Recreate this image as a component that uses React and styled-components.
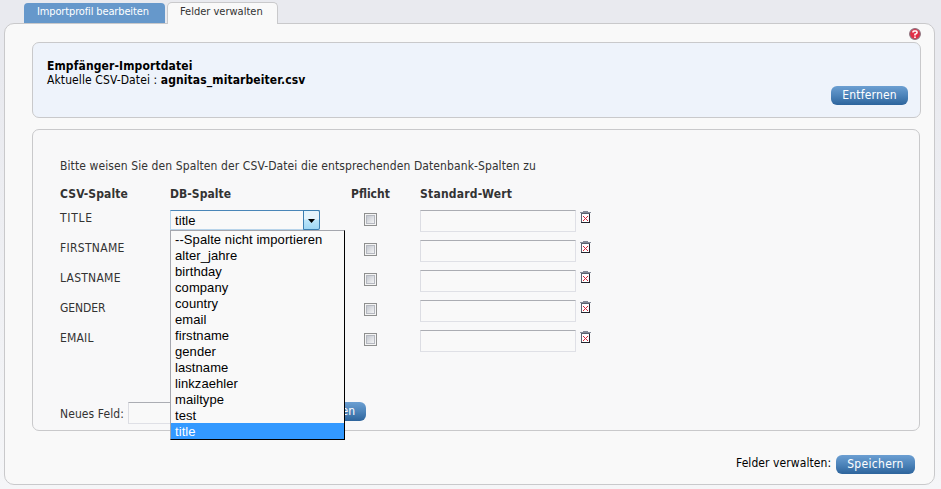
import React from "react";
import styled, { createGlobalStyle } from "styled-components";

const Global = createGlobalStyle`
  *, *::before, *::after { box-sizing: border-box; }
  html, body { margin: 0; height: 489px; overflow: hidden; background: #e9eaef; }
  body {
    font-family: "DejaVu Sans Condensed", "DejaVu Sans", sans-serif;
    font-stretch: condensed;
    font-size: 12px;
    line-height: 14px;
    color: #333;
  }
`;

const Page = styled.div`
  width: 941px;
  height: 489px;
  padding: 2px 6px 0 4px;
  background: linear-gradient(#e9eaef 15%, #f5f6f8);
`;

const Tabs = styled.nav`
  display: flex;
  align-items: flex-end;
  gap: 2px;
  height: 22px;
  padding-left: 20px;
  position: relative;
  z-index: 1;
`;

const Tab = styled.a`
  width: ${(p) => p.$width}px;
  height: ${(p) => (p.$active ? 22 : 20)}px;
  margin-bottom: ${(p) => (p.$active ? 0 : 1)}px;
  padding: ${(p) => (p.$active ? "2px 0 0 12px" : "2px 0 0 13px")};
  border-radius: ${(p) => (p.$active ? "5px 5px 0 0" : "4px 4px 0 0")};
  border: solid #c9c9cb;
  border-width: ${(p) => (p.$active ? "1px 1px 0" : "0")};
  background: ${(p) => (p.$active ? "#f9f9f9" : "#6698cb")};
  color: ${(p) => (p.$active ? "#333" : "#fff")};
  font-size: 11px;
  white-space: nowrap;
`;

const Text = styled.span`
  display: inline-block;
  white-space: nowrap;
  letter-spacing: ${(p) => p.$track || 0}px;
  font-weight: ${(p) => (p.$bold ? "bold" : "normal")};
`;

const Panel = styled.main`
  display: flex;
  flex-direction: column;
  height: 462px;
  margin-top: -1px;
  padding: 4px 14px 0 27px;
  border: 1px solid #c9c9cb;
  border-radius: 10px;
  background: #f9f9f9;
`;

const HelpRow = styled.div`
  display: flex;
  justify-content: flex-end;
  height: 14px;
  margin-right: -2px;
`;

const FileCard = styled.section`
  display: flex;
  justify-content: space-between;
  width: 889px;
  height: 76px;
  padding: 16px 12px 0 14px;
  border: 1px solid #c9c9cb;
  border-radius: 7px;
  background: #eef3fb;
  color: #000;
`;

const FileInfo = styled.div`
  display: flex;
  flex-direction: column;
`;

const Button = styled.button`
  display: block;
  flex: none;
  width: ${(p) => p.$width}px;
  height: 19px;
  margin: ${(p) => p.$margin || 0};
  padding: 0;
  border: 0;
  border-radius: 6px;
  background: linear-gradient(#6c9fd2, #4d84ba 50%, #2d649c);
  color: #fff;
  font: inherit;
  line-height: 17px;
  text-align: ${(p) => p.$align || "center"};
  padding-right: ${(p) => (p.$align ? 11 : 0)}px;
`;

const FieldsCard = styled.section`
  width: 888px;
  height: 302px;
  margin-top: 11px;
  padding: 29px 0 0 27px;
  border: 1px solid #c9c9cb;
  border-radius: 7px;
  background: #f8f8f9;
`;

const Intro = styled.p`
  margin: 0 0 14px;
  height: 14px;
`;

const Grid = styled.div`
  display: grid;
  grid-template-columns: 110px 181px 69px 160px 20px;
  grid-template-rows: 23px;
  grid-auto-rows: 30px;
`;

const Cell = styled.div`
  padding: ${(p) => p.$pad || 0};
`;

const Input = styled.div`
  width: ${(p) => p.$width || 156}px;
  height: 22px;
  border: 1px solid #dfe0e6;
  border-top-color: #abadb3;
  border-left-color: #dcdde3;
  background: #f9f9f9;
`;

const Checkbox = styled.div`
  width: 13px;
  height: 13px;
  border: 1px solid #8e8f8f;
  padding: 1px;
  background: #f4f4f4;
  &::before {
    content: "";
    display: block;
    height: 9px;
    border: 1px solid #b5b8c0;
    background: linear-gradient(135deg, #c4c8d0, #f3f3f4);
  }
`;

const SelectBox = styled.div`
  position: relative;
  display: flex;
  width: 150px;
  height: 20px;
  border: 1px solid #b8d4ea;
  border-top-color: #4a86b8;
  background: #f9f9f9;
  color: #000;
  font: 13px/19px "Liberation Sans", Arial, sans-serif;
  letter-spacing: 0.08px;
`;

const SelectValue = styled.div`
  flex: 1;
  padding-left: 4px;
`;

const Arrow = styled.div`
  display: flex;
  align-items: center;
  justify-content: center;
  width: 17px;
  height: 20px;
  margin: -1px -1px 0 0;
  padding-top: 2px;
  border: 1px solid #3c7fb1;
  border-radius: 0 2px 2px 0;
  background: linear-gradient(#e5f4fc 45%, #bce5fa 50%, #9fd8f5);
`;

const Menu = styled.ul`
  position: absolute;
  z-index: 2;
  left: -1px;
  top: 19px;
  width: 175px;
  height: 210px;
  margin: 0;
  padding: 0;
  list-style: none;
  border: 1px solid #000;
  border-top-color: #a5a7ae;
  border-left-color: #a5a7ae;
  background: #f9f9f9;
`;

const Option = styled.li`
  height: 16px;
  padding-left: 4px;
  line-height: 17px;
  background: ${(p) => (p.$selected ? "#3399ff" : "transparent")};
  color: ${(p) => (p.$selected ? "#fff" : "#000")};
  white-space: nowrap;
`;

const NewField = styled.div`
  display: flex;
  align-items: flex-start;
  margin-top: 42px;
`;

const NewLabel = styled.label`
  width: 68px;
  padding-top: 5px;
`;

const Footer = styled.footer`
  display: flex;
  justify-content: flex-end;
  margin-top: 24px;
  padding-right: 5px;
  color: #000;
`;

const FooterLabel = styled.span`
  width: 100px;
  padding-top: 1px;
`;

const Help = () => (
  <svg width="14" height="14" viewBox="0 0 14 14">
    <circle cx="7" cy="6" r="5.4" fill="#e22d47" stroke="#8c7580" strokeWidth="1.1" />
    <path d="M5 4.5V4q0-1 1-1h2q1 0 1 1v.6q0 .6-.7 1L7 6.3v1.2M7 8.5v1.4" fill="none" stroke="#fff" strokeWidth="1.6" />
  </svg>
);

const Trash = () => (
  <svg width="11" height="13" viewBox="0 0 11 13" shapeRendering="crispEdges" display="block">
    <path fill="#fff" d="M2 3h7v8H2z" />
    <path fill="#858b98" d="M3 0h5v1H3zM0 1h11v1H0z" />
    <path fill="#5b6170" d="M1 2h9v1H1zM1 3h1v8H1z" />
    <path fill="#20232d" d="M9 3h1v9H9zM1 11h8v1H1z" />
    <path fill="#d8283b" d="M3 5h1v1H3zM7 5h1v1H7zM4 6h1v1H4zM6 6h1v1H6zM5 7h1v1H5zM4 8h1v1H4zM6 8h1v1H6zM3 9h1v1H3zM7 9h1v1H7z" />
  </svg>
);

const options = [
  "--Spalte nicht importieren", "alter_jahre", "birthday", "company", "country", "email",
  "firstname", "gender", "lastname", "linkzaehler", "mailtype", "test", "title",
];

const columns = [
  { name: "TITLE", track: 0.7 },
  { name: "FIRSTNAME", track: 0.3 },
  { name: "LASTNAME", track: 0.25 },
  { name: "GENDER", track: -0.1 },
  { name: "EMAIL", track: 0.2 },
];

const ColumnSelect = () => (
  <SelectBox>
    <SelectValue>title</SelectValue>
    <Arrow>
      <svg width="7" height="4" viewBox="0 0 7 4"><path d="M0 0h7L3.5 4z" /></svg>
    </Arrow>
    <Menu>
      {options.map((o) => <Option key={o} $selected={o === "title"}>{o}</Option>)}
    </Menu>
  </SelectBox>
);

export default function App() {
  return (
    <Page>
      <Global />
      <Tabs>
        <Tab $width={141}><Text $track={-0.14}>Importprofil bearbeiten</Text></Tab>
        <Tab $width={111} $active><Text>Felder verwalten</Text></Tab>
      </Tabs>
      <Panel>
        <HelpRow><Help /></HelpRow>
        <FileCard>
          <FileInfo>
            <Text $bold $track={0.12}>Empfänger-Importdatei</Text>
            <div><Text $track={0.1}>Aktuelle CSV-Datei :&nbsp;</Text><Text $bold $track={0.1}>agnitas_mitarbeiter.csv</Text></div>
          </FileInfo>
          <Button $width={77} $margin="27px 0 0"><Text $track={0.2}>Entfernen</Text></Button>
        </FileCard>
        <FieldsCard>
          <Intro><Text $track={0.1}>Bitte weisen Sie den Spalten der CSV-Datei die entsprechenden Datenbank-Spalten zu</Text></Intro>
          <Grid>
            <Text $bold $track={0.12}>CSV-Spalte</Text>
            <Text $bold $track={0.05}>DB-Spalte</Text>
            <Text $bold>Pflicht</Text>
            <Text $bold $track={0.23}>Standard-Wert</Text>
            <span />
            {columns.map(({ name, track }, i) => (
              <React.Fragment key={name}>
                <Cell $pad="1px 0 0"><Text $track={track}>{name}</Text></Cell>
                <Cell>{i === 0 && <ColumnSelect />}</Cell>
                <Cell $pad="3px 0 0 13px"><Checkbox /></Cell>
                <Cell><Input /></Cell>
                <Cell $pad="1px 0 0"><Trash /></Cell>
              </React.Fragment>
            ))}
          </Grid>
          <NewField>
            <NewLabel><Text $track={0.1}>Neues Feld:</Text></NewLabel>
            <Input $width={150} />
            <Button $width={78} $margin="0 0 0 10px" $align="right"><Text>Hinzufügen</Text></Button>
          </NewField>
        </FieldsCard>
        <Footer>
          <FooterLabel><Text $track={0.08}>Felder verwalten:</Text></FooterLabel>
          <Button $width={79}><Text $track={0.3}>Speichern</Text></Button>
        </Footer>
      </Panel>
    </Page>
  );
}
